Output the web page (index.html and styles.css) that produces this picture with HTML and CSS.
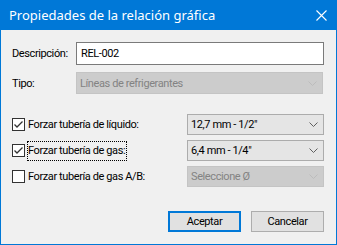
FILE: index.html
```
<!DOCTYPE html>
<html lang="es">
<head>
<meta charset="utf-8">
<title>Propiedades de la relación gráfica</title>
<link rel="stylesheet" href="styles.css">
</head>
<body>
<div class="dialog">
  <div class="titlebar">
    <span class="title">Propiedades de la relación gráfica</span>
    <svg class="close" width="11" height="11" viewBox="0 0 11 11"><path d="M0.5 0.5 L10.5 10.5 M10.5 0.5 L0.5 10.5" stroke="#fff" stroke-width="1.1" fill="none"/></svg>
  </div>
  <div class="body">
    <div class="row row-desc">
      <span class="lbl">Descripción:</span>
      <div class="input">REL-002</div>
    </div>
    <div class="row row-tipo">
      <span class="lbl">Tipo:</span>
      <div class="select select-wide disabled"><span class="val">Líneas de refrigerantes</span><svg class="chev" width="9" height="5" viewBox="0 0 9 5"><path d="M0.5 0.5 L4.5 4.5 L8.5 0.5" stroke="currentColor" fill="none"/></svg></div>
    </div>
    <div class="checks">
      <div class="crow">
        <span class="cb"><svg width="11" height="11" viewBox="0 0 11 11"><path d="M1.5 5.5 L4 8 L9.5 2.5" stroke="#333" stroke-width="1.3" fill="none"/></svg></span>
        <span class="clbl">Forzar tubería de líquido:</span>
        <div class="select select-narrow"><span class="val">12,7 mm - 1/2"</span><svg class="chev" width="9" height="5" viewBox="0 0 9 5"><path d="M0.5 0.5 L4.5 4.5 L8.5 0.5" stroke="currentColor" fill="none"/></svg></div>
      </div>
      <div class="crow">
        <span class="cb"><svg width="11" height="11" viewBox="0 0 11 11"><path d="M1.5 5.5 L4 8 L9.5 2.5" stroke="#333" stroke-width="1.3" fill="none"/></svg></span>
        <span class="clbl focus">Forzar tubería de gas:</span>
        <div class="select select-narrow"><span class="val">6,4 mm - 1/4"</span><svg class="chev" width="9" height="5" viewBox="0 0 9 5"><path d="M0.5 0.5 L4.5 4.5 L8.5 0.5" stroke="currentColor" fill="none"/></svg></div>
      </div>
      <div class="crow">
        <span class="cb"></span>
        <span class="clbl">Forzar tubería de gas A/B:</span>
        <div class="select select-narrow disabled"><span class="val">Seleccione Ø</span><svg class="chev" width="9" height="5" viewBox="0 0 9 5"><path d="M0.5 0.5 L4.5 4.5 L8.5 0.5" stroke="currentColor" fill="none"/></svg></div>
      </div>
    </div>
    <div class="buttons">
      <div class="btn btn-default">Aceptar</div>
      <div class="btn">Cancelar</div>
    </div>
  </div>
</div>
</body>
</html>
```
FILE: styles.css
```
* { box-sizing: border-box; }
html, body { margin: 0; padding: 0; }
body {
  font-family: Roboto, "Noto Sans", sans-serif;
  font-size: 11px;
  letter-spacing: -0.4px;
  color: #000;
  background: #f0f0f0;
}
.dialog {
  width: 337px;
  height: 245px;
  border: 1px solid #0078d7;
  border-top: 0;
  background: #f0f0f0;
  display: flex;
  flex-direction: column;
}
.titlebar {
  height: 30px;
  flex: none;
  background: #0078d7;
  color: #fff;
  display: flex;
  align-items: center;
  justify-content: space-between;
  padding: 0 9px 0 8px;
  font-family: "Noto Sans", sans-serif;
  font-size: 13px;
  letter-spacing: 0;
}
.close { display: block; }
.body {
  flex: 1;
  padding: 12px 11px 0 11px;
  display: flex;
  flex-direction: column;
}
.row {
  display: flex;
  align-items: center;
}
.lbl {
  width: 64px;
  flex: none;
}
.input {
  width: 248px;
  height: 23px;
  background: #fff;
  border: 1px solid #7a7a7a;
  padding: 0 4px;
  display: flex;
  align-items: center;
}
.row-tipo { margin-top: 7px; }
.select {
  display: flex;
  align-items: center;
  justify-content: space-between;
  background: #e5e5e5;
  border: 1px solid #acacac;
  color: #000;
  padding: 0 5px 0 3px;
}
.select .chev { color: #606060; flex: none; }
.select.disabled {
  background: #cccccc;
  border-color: #c4c4c4;
  color: #838383;
}
.select.disabled .chev { color: #bcbcbc; }
.select-wide { width: 247px; height: 22px; }
.select-narrow { width: 137px; height: 21px; margin-right: 1px; }
.checks {
  margin-top: 20px;
  display: flex;
  flex-direction: column;
  gap: 5px;
}
.crow {
  display: flex;
  align-items: center;
}
.cb {
  width: 13px;
  height: 13px;
  flex: none;
  border: 1px solid #333;
  background: #fff;
  display: flex;
  align-items: center;
  justify-content: center;
}
.cb svg { display: block; }
.clbl {
  flex: none;
  margin-left: 2px;
  padding: 0 1px 0 0;
  height: 20px;
  display: flex;
  align-items: center;
  border: 1px dotted transparent;
}
.clbl.focus { border-color: #000; }
.crow .select { margin-left: auto; }
.buttons {
  margin-top: 24px;
  display: flex;
  justify-content: flex-end;
  gap: 10px;
  padding-right: 1px;
}
.btn {
  width: 73px;
  height: 21px;
  background: #e1e1e1;
  border: 1px solid #adadad;
  display: flex;
  align-items: center;
  justify-content: center;
}
.btn-default {
  border: 2px solid #0078d7;
}
```
